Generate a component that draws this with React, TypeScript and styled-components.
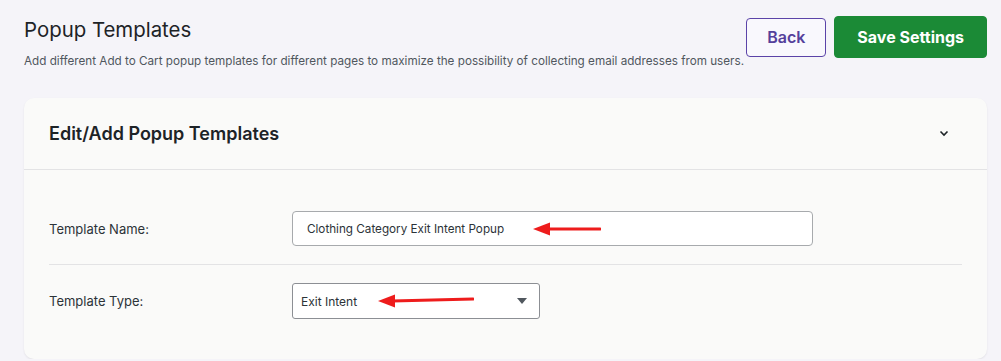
import React from "react";
import styled, { createGlobalStyle } from "styled-components";

const GlobalStyle = createGlobalStyle`
  body {
    margin: 0;
    background: #f5f4f9;
    font-family: Inter, "Noto Sans", sans-serif;
    color: #1d2327;
  }
`;

const Page = styled.div`
  padding: 16px 14px 0 24px;
`;

const TopBar = styled.div`
  display: flex;
  justify-content: space-between;
  align-items: flex-start;
`;

const Title = styled.h1`
  margin: 0;
  font-size: 20.4px;
  line-height: 28px;
  font-weight: 400;
  color: #1d2327;
`;

const Subtitle = styled.p`
  margin: 8px 0 0;
  font-size: 11.7px;
  line-height: 18px;
  color: #50575e;
`;

const Actions = styled.div`
  display: flex;
  align-items: center;
  gap: 8px;
`;

const Button = styled.button<{ $primary?: boolean }>`
  font-family: Inter, "Noto Sans", sans-serif;
  font-size: 16px;
  font-weight: ${(p) => (p.$primary ? 700 : 600)};
  border-radius: 4px;
  cursor: pointer;
  height: ${(p) => (p.$primary ? "42px" : "39px")};
  padding: 0 ${(p) => (p.$primary ? "22px" : "20px")};
  border: 1px solid ${(p) => (p.$primary ? "#1b8a36" : "#5b43a8")};
  background: ${(p) => (p.$primary ? "#1b8a36" : "#f9f8fd")};
  color: ${(p) => (p.$primary ? "#fff" : "#55409b")};
`;

const Card = styled.div`
  margin-top: 28px;
  background: #fafaf9;
  border-radius: 10px;
  box-shadow: 0 1px 2px rgba(0, 0, 0, 0.08);
`;

const CardHeader = styled.div`
  display: flex;
  align-items: center;
  justify-content: space-between;
  height: 71px;
  padding: 0 38px 0 25px;
  border-bottom: 1px solid #e3e3e5;
`;

const CardTitle = styled.h2`
  margin: 0;
  font-size: 18px;
  font-weight: 600;
  color: #1d2327;
`;

const CardBody = styled.div`
  padding: 23px 25px 22px;
`;

const Row = styled.div<{ $divider?: boolean }>`
  display: flex;
  align-items: center;
  height: 72px;
  box-sizing: border-box;
  border-bottom: ${(p) => (p.$divider ? "1px solid #e3e3e5" : "none")};
  position: relative;
`;

const Label = styled.label`
  width: 243px;
  font-size: 13px;
  color: #2c3338;
`;

const TextInput = styled.div`
  width: 521px;
  height: 35px;
  box-sizing: border-box;
  border: 1px solid #a7aaad;
  border-radius: 4px;
  background: #fff;
  display: flex;
  align-items: center;
  padding: 0 14px;
  font-size: 11.7px;
  color: #2c3338;
`;

const Select = styled.div`
  width: 248px;
  height: 36px;
  box-sizing: border-box;
  border: 1px solid #8c8f94;
  border-radius: 3px;
  background: #fff;
  display: flex;
  align-items: center;
  justify-content: space-between;
  padding: 0 12px 0 8px;
  font-size: 12px;
  color: #2c3338;
`;

const Arrow = styled.svg<{ $left: number; $top: number }>`
  position: absolute;
  left: ${(p) => p.$left}px;
  top: ${(p) => p.$top}px;
  pointer-events: none;
`;

const RedArrow = ({ left, top, width, tilt = 0 }: { left: number; top: number; width: number; tilt?: number }) => (
  <Arrow $left={left} $top={top} width={width} height={16} viewBox={`0 0 ${width} 16`}>
    <line x1={14} y1={8} x2={width - 1} y2={8 - tilt} stroke="#ee1c1c" strokeWidth={3} strokeLinecap="round" />
    <polygon points="0,8 17,1.5 17,14.5" fill="#ee1c1c" />
  </Arrow>
);

export default function App() {
  return (
    <>
      <GlobalStyle />
      <Page>
        <TopBar>
          <div>
            <Title>Popup Templates</Title>
            <Subtitle>
              Add different Add to Cart popup templates for different pages to maximize the possibility of collecting email addresses from users.
            </Subtitle>
          </div>
          <Actions>
            <Button>Back</Button>
            <Button $primary>Save Settings</Button>
          </Actions>
        </TopBar>
        <Card>
          <CardHeader>
            <CardTitle>Edit/Add Popup Templates</CardTitle>
            <svg width="10" height="7" viewBox="0 0 10 7">
              <path d="M1.5 1.5 L5 5 L8.5 1.5" fill="none" stroke="#1d2327" strokeWidth="1.6" />
            </svg>
          </CardHeader>
          <CardBody>
            <Row $divider>
              <Label>Template Name:</Label>
              <TextInput>Clothing Category Exit Intent Popup</TextInput>
              <RedArrow left={484} top={28} width={68} />
            </Row>
            <Row>
              <Label>Template Type:</Label>
              <Select>
                <span>Exit Intent</span>
                <svg width="10" height="6" viewBox="0 0 10 6">
                  <polygon points="0,0 10,0 5,6" fill="#50575e" />
                </svg>
              </Select>
              <RedArrow left={329} top={28} width={96} tilt={2} />
            </Row>
          </CardBody>
        </Card>
      </Page>
    </>
  );
}
